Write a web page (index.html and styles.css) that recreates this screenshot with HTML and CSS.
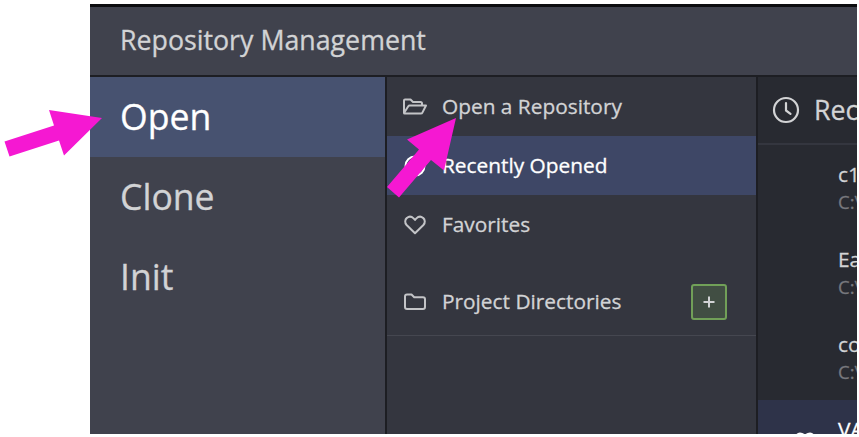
FILE: index.html
```html
<!DOCTYPE html>
<html lang="en">
<head>
<meta charset="utf-8">
<title>Repository Management</title>
<link rel="stylesheet" href="styles.css">
</head>
<body>
<div class="window">
  <header class="header">Repository Management</header>
  <div class="body">
    <nav class="tabs">
      <div class="tab active">Open</div>
      <div class="tab">Clone</div>
      <div class="tab">Init</div>
    </nav>
    <section class="sources">
      <div class="source">
        <svg class="icon" viewBox="0 0 26 24"><path d="M2 18V5.500Q2 4.500 3 4.500H8.500L11 7H18.500Q20 7 20 8.500V10.500M2 18L6.300 11.300Q6.800 10.500 7.800 10.500H24L20.400 17.600Q20 18.600 18.800 18.600H2.600Q2 18.600 2 18Z"/></svg>
        <span>Open a Repository</span>
      </div>
      <div class="source active">
        <svg class="icon" viewBox="0 0 26 24"><circle cx="13" cy="12" r="9.5"/><path d="M13 6.5V12L16.5 14.5"/></svg>
        <span>Recently Opened</span>
      </div>
      <div class="source">
        <svg class="icon" viewBox="0 0 26 24"><path d="M13 20.3L4.6 12C2.6 9.8 2.8 6.6 4.9 4.9C7 3.1 9.7 3.5 11.6 5.4L13 6.9L14.4 5.4C16.3 3.5 19 3.1 21.1 4.9C23.2 6.6 23.4 9.8 21.4 12Z"/></svg>
        <span>Favorites</span>
      </div>
      <div class="source directories">
        <svg class="icon" viewBox="0 0 26 24"><path d="M5 4.5H9.5L12.2 7.2H21Q23 7.2 23 9.2V17Q23 19 21 19H5Q3 19 3 17V6.5Q3 4.5 5 4.5Z"/></svg>
        <span>Project Directories</span>
        <div class="add"><svg viewBox="0 0 12 12"><path d="M6 .5V11.5M.5 6H11.5"/></svg></div>
      </div>
    </section>
    <section class="recent">
      <div class="recent-title">
        <svg class="clock" viewBox="0 0 28 28"><circle cx="14" cy="14" r="12"/><path d="M14 7V14.5L18.5 17.8"/></svg>
        <span>Recently Opened</span>
      </div>
      <div class="repo"><div class="name">c1</div><div class="path">C:\</div></div>
      <div class="repo"><div class="name">Ea</div><div class="path">C:\</div></div>
      <div class="repo"><div class="name">co</div><div class="path">C:\</div></div>
      <div class="repo selected">
        <svg class="heart" viewBox="0 0 20 20"><path d="M10 17L2 9C0 6 1 2 5 1.5Q8 1.5 10 4Q12 1.5 15 1.5C19 2 20 6 18 9Z"/></svg>
        <div class="name">VA</div>
      </div>
    </section>
  </div>
</div>
<svg class="arrows" viewBox="0 0 859 437"><path d="M102 118L49 110L54 125.500L4.500 141.500L9.500 156.500L59 140.500L64 155.500Z"/><path d="M456 118L407 139.500L419 149.500L387 187L399 197.500L431 160L444 170.500Z"/></svg>
</body>
</html>
```
FILE: styles.css
```css
* { box-sizing: border-box; }
body {
  margin: 0;
  width: 859px;
  height: 437px;
  overflow: hidden;
  background: #fff;
  font-family: "Open Sans", "Noto Sans", sans-serif;
  color: #d2d3d5;
  -webkit-text-stroke: 0.3px currentColor;
}
svg { fill: none; stroke: currentColor; stroke-width: 2; stroke-linejoin: round; stroke-linecap: round; flex: none; }
.window {
  display: flex;
  flex-direction: column;
  width: 767px;
  height: 430px;
  margin: 4px 0 0 90px;
  border-top: 3px solid #0c0c0f;
  background: #40424d;
  overflow: hidden;
}
.header {
  flex: none;
  height: 70px;
  padding-left: 30px;
  border-bottom: 2px solid #1d1e23;
  font-size: 26.75px;
  line-height: 66px;
}
.body { display: flex; flex: 1; min-height: 0; }
.tabs { width: 297px; flex: none; border-right: 2px solid #1d1e23; }
.tab { height: 80px; padding-left: 30px; font-size: 35.6px; line-height: 79px; }
.tab.active { background: #475270; color: #fff; }
.sources { width: 371px; flex: none; border-right: 2px solid #1d1e23; background: #34363f; }
.source {
  display: flex;
  align-items: center;
  height: 59px;
  padding-left: 15px;
  font-size: 20.85px;
  line-height: 28px;
  white-space: nowrap;
}
.source span { padding-bottom: 1px; }
.source.active { background: #3e4766; color: #fff; }
.icon { width: 26px; height: 24px; margin-right: 14px; color: #c3c4c7; }
.source.active .icon { color: #fff; }
.directories { height: 82px; padding-top: 14px; border-bottom: 1px solid #454750; }
.add {
  display: flex;
  align-items: center;
  justify-content: center;
  width: 36px;
  height: 36px;
  margin-left: auto;
  margin-right: 29px;
  border: 2px solid #71a058;
  border-radius: 3px;
  background: #414e43;
}
.add svg { width: 12px; height: 12px; stroke-linecap: butt; }
.recent { flex: 1; min-width: 0; background: #282a31; overflow: hidden; }
.recent-title {
  display: flex;
  align-items: center;
  height: 68px;
  padding-left: 14px;
  border-bottom: 2px solid #34363f;
  font-size: 26.75px;
  line-height: 64px;
  white-space: nowrap;
}
.clock { width: 28px; height: 28px; margin-right: 14px; stroke-width: 2.2; }
.repo { height: 85px; padding: 15px 0 0 80px; font-size: 20.85px; line-height: 28px; }
.path { font-size: 18.5px; line-height: 27px; color: #77787d; }
.selected { position: relative; background: #2e3349; color: #fff; }
.heart { position: absolute; left: 37px; top: 32px; width: 20px; height: 20px; }
.arrows { position: absolute; left: 0; top: 0; width: 859px; height: 437px; fill: #f518d2; stroke: none; }
```
